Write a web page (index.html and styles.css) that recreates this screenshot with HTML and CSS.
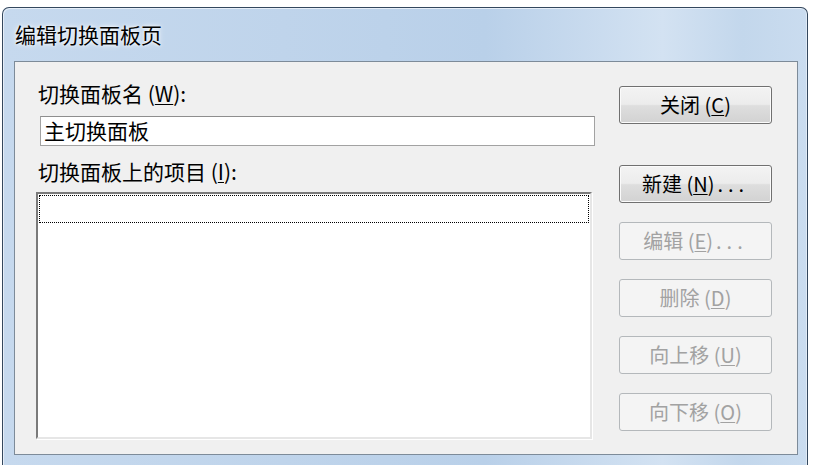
FILE: index.html
```html
<!DOCTYPE html>
<html lang="zh-CN">
<head>
<meta charset="utf-8">
<title>编辑切换面板页</title>
<link rel="stylesheet" href="styles.css">
</head>
<body>
<div class="window">
  <div class="titlebar"><span class="title">编辑切换面板页</span></div>
  <div class="client">
    <div class="left">
      <div class="label label-name">切换面板名 (<u>W</u>):</div>
      <div class="input">主切换面板</div>
      <div class="label label-items">切换面板上的项目 (<u>I</u>):</div>
      <div class="list">
        <div class="focus-row"></div>
      </div>
    </div>
    <div class="right">
      <div class="btn btn-close">关闭 (<u>C</u>)</div>
      <div class="btn">新建 (<u>N</u>)<span class="dots">...</span></div>
      <div class="btn disabled">编辑 (<u>E</u>)<span class="dots">...</span></div>
      <div class="btn disabled">删除 (<u>D</u>)</div>
      <div class="btn disabled">向上移 (<u>U</u>)</div>
      <div class="btn disabled">向下移 (<u>O</u>)</div>
    </div>
  </div>
</div>
</body>
</html>
```

FILE: styles.css
```css
html, body {
  margin: 0;
  padding: 0;
  background: #ffffff;
  overflow: hidden;
  height: 465px;
}

body {
  font-family: "Noto Sans CJK SC", "Noto Sans", sans-serif;
  color: #000;
}

.window {
  margin: 7px 0 0 2px;
  width: 804px;
  height: 480px;
  border: 1px solid #34485e;
  border-bottom: none;
  border-radius: 7px 7px 0 0;
  background: linear-gradient(90deg, #c6d9ee 0%, #bfd4eb 35%, #b9d0e9 60%, #d3e2f2 82%, #c3d7ec 92%, #cadcef 100%);
  box-shadow: inset 1px 1px 0 #e6eef8, inset -1px 0 0 #e0eaf5;
  display: flex;
  flex-direction: column;
}

.titlebar {
  height: 53px;
  display: flex;
  align-items: center;
  padding-left: 12px;
  box-sizing: border-box;
  padding-bottom: 1px;
}

.title {
  font-size: 21px;
  line-height: 24px;
  text-shadow: 0 0 6px #ffffff, 0 0 3px #ffffff;
}

.client {
  margin-left: 11px;
  width: 782px;
  height: 392px;
  border: 1px solid #7d8b99;
  background: #f0f0f0;
  display: flex;
}

.left {
  margin-left: 21px;
  width: 559px;
  display: flex;
  flex-direction: column;
}

.label {
  font-size: 21px;
  line-height: 24px;
  margin-left: 2px;
  white-space: nowrap;
}

.label u, .btn u {
  text-decoration-thickness: 1px;
  text-underline-offset: 2px;
}

.label-name {
  margin-top: 19px;
}

.input {
  margin-top: 11px;
  margin-left: 4px;
  width: 555px;
  height: 30px;
  box-sizing: border-box;
  border: 1px solid #a2a2a2;
  border-top-color: #8e8e8e;
  background: #ffffff;
  font-size: 21px;
  line-height: 27px;
  padding-left: 3px;
}

.label-items {
  margin-top: 13px;
}

.list {
  margin-top: 9px;
  width: 556px;
  height: 247px;
  box-sizing: border-box;
  border-style: solid;
  border-width: 2px;
  border-color: #7a7a7a #e6e6e6 #e6e6e6 #7a7a7a;
  box-shadow: 1px 1px 0 #ffffff;
  background: #ffffff;
  padding: 1px 1px 0 1px;
}

.focus-row {
  height: 28px;
  box-sizing: border-box;
  border: 1px dotted #000;
}

.right {
  margin-left: 24px;
  padding-top: 24px;
  display: flex;
  flex-direction: column;
  gap: 19px;
}

.btn {
  width: 153px;
  height: 38px;
  box-sizing: border-box;
  border: 1px solid #707070;
  border-radius: 3px;
  background: linear-gradient(#f3f3f3 0%, #ececec 48%, #dedede 52%, #d2d2d2 100%);
  box-shadow: inset 0 0 0 1px #fbfbfb;
  font-size: 20px;
  line-height: 36px;
  text-align: center;
  white-space: nowrap;
}

.dots {
  letter-spacing: 5px;
  margin-left: 3px;
}

.btn-close {
  margin-bottom: 22px;
}

.btn.disabled {
  border-color: #b4b8bb;
  background: #f4f4f4;
  box-shadow: none;
  color: #a2a2a2;
}
```
